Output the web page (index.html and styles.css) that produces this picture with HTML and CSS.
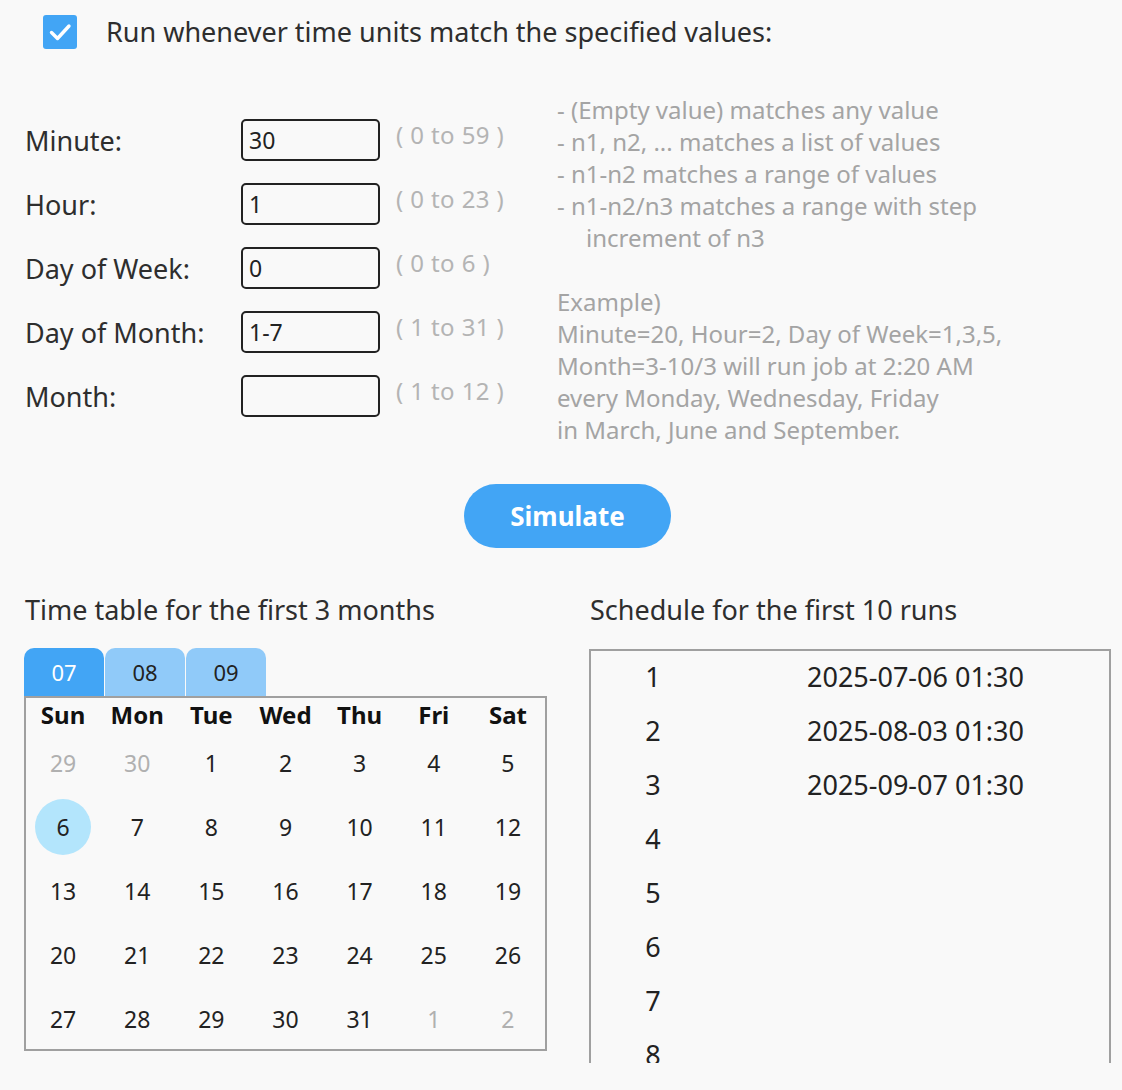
FILE: index.html
```html
<!DOCTYPE html>
<html lang="en">
<head>
<meta charset="utf-8">
<title>Schedule</title>
<link rel="stylesheet" href="styles.css">
</head>
<body>
<div class="page">
  <label class="check-row">
    <span class="checkbox">
      <svg width="34" height="34" viewBox="0 0 34 34"><path d="M8.5 17.5 L14.5 23.5 L26 11" fill="none" stroke="#fff" stroke-width="3.4" stroke-linecap="round" stroke-linejoin="round"/></svg>
    </span>
    <span class="check-label">Run whenever time units match the specified values:</span>
  </label>

  <div class="main">
    <div class="form">
      <div class="f-label">Minute:</div><div class="f-input">30</div><div class="f-hint">( 0 to 59 )</div>
      <div class="f-label">Hour:</div><div class="f-input">1</div><div class="f-hint">( 0 to 23 )</div>
      <div class="f-label">Day of Week:</div><div class="f-input">0</div><div class="f-hint">( 0 to 6 )</div>
      <div class="f-label">Day of Month:</div><div class="f-input">1-7</div><div class="f-hint">( 1 to 31 )</div>
      <div class="f-label">Month:</div><div class="f-input"></div><div class="f-hint">( 1 to 12 )</div>
    </div>
    <div class="desc">
      <div>- (Empty value) matches any value</div>
      <div>- n1, n2, ... matches a list of values</div>
      <div>- n1-n2 matches a range of values</div>
      <div>- n1-n2/n3 matches a range with step</div>
      <div class="indent">increment of n3</div>
      <div class="blank"></div>
      <div>Example)</div>
      <div>Minute=20, Hour=2, Day of Week=1,3,5,</div>
      <div>Month=3-10/3 will run job at 2:20 AM</div>
      <div>every Monday, Wednesday, Friday</div>
      <div>in March, June and September.</div>
    </div>
  </div>

  <div class="btn-row"><button class="simulate">Simulate</button></div>

  <div class="bottom">
    <div class="col-left">
      <div class="title">Time table for the first 3 months</div>
      <div class="tabs">
        <div class="tab active">07</div>
        <div class="tab">08</div>
        <div class="tab">09</div>
      </div>
      <div class="calendar">
        <div class="cal-head">
          <span>Sun</span><span>Mon</span><span>Tue</span><span>Wed</span><span>Thu</span><span>Fri</span><span>Sat</span>
        </div>
        <div class="cal-row">
          <span class="muted">29</span><span class="muted">30</span><span>1</span><span>2</span><span>3</span><span>4</span><span>5</span>
        </div>
        <div class="cal-row">
          <span><i class="sel">6</i></span><span>7</span><span>8</span><span>9</span><span>10</span><span>11</span><span>12</span>
        </div>
        <div class="cal-row">
          <span>13</span><span>14</span><span>15</span><span>16</span><span>17</span><span>18</span><span>19</span>
        </div>
        <div class="cal-row">
          <span>20</span><span>21</span><span>22</span><span>23</span><span>24</span><span>25</span><span>26</span>
        </div>
        <div class="cal-row">
          <span>27</span><span>28</span><span>29</span><span>30</span><span>31</span><span class="muted">1</span><span class="muted">2</span>
        </div>
      </div>
    </div>
    <div class="col-right">
      <div class="title">Schedule for the first 10 runs</div>
      <div class="schedule">
        <div class="s-row"><span class="s-num">1</span><span class="s-date">2025-07-06 01:30</span></div>
        <div class="s-row"><span class="s-num">2</span><span class="s-date">2025-08-03 01:30</span></div>
        <div class="s-row"><span class="s-num">3</span><span class="s-date">2025-09-07 01:30</span></div>
        <div class="s-row"><span class="s-num">4</span><span class="s-date"></span></div>
        <div class="s-row"><span class="s-num">5</span><span class="s-date"></span></div>
        <div class="s-row"><span class="s-num">6</span><span class="s-date"></span></div>
        <div class="s-row"><span class="s-num">7</span><span class="s-date"></span></div>
        <div class="s-row"><span class="s-num">8</span><span class="s-date"></span></div>
      </div>
    </div>
  </div>
</div>
</body>
</html>
```

FILE: styles.css
```css
* { box-sizing: border-box; }
html, body { margin: 0; padding: 0; }
body {
  background: #f9f9f9;
  color: #222;
  font-family: "Noto Sans", "Open Sans", sans-serif;
  font-size: 24px;
  width: 1122px;
  height: 1090px;
  overflow: hidden;
}
.page { padding: 14px 0 0 0; }

.check-row {
  display: flex;
  align-items: center;
  padding-left: 43px;
  height: 35px;
}
.checkbox {
  width: 34px;
  height: 34px;
  background: #42a5f5;
  border-radius: 3px;
  display: flex;
}
.check-label {
  margin-left: 29px;
  font-size: 27px;
  color: #2e2e2e;
}

.main {
  display: flex;
  margin-top: 45px;
}
.form {
  display: grid;
  grid-template-columns: 216px 139px auto;
  grid-auto-rows: 64px;
  align-items: center;
  padding-left: 25px;
  padding-top: 14px;
  width: 557px;
}
.f-label { font-size: 27px; color: #2e2e2e; }
.f-input {
  height: 42px;
  border: 2px solid #222;
  border-radius: 5px;
  padding-left: 6px;
  font-size: 23px;
  line-height: 38px;
  color: #222;
}
.f-hint {
  align-self: start;
  margin-top: 10px;
  padding-left: 16px;
  font-size: 24px;
  letter-spacing: 0.4px;
  line-height: 33px;
  color: #b4b4b4;
}
.desc {
  font-size: 24px;
  line-height: 32px;
  color: #a4a4a4;
}
.desc .indent { padding-left: 29px; }
.desc .blank { height: 32px; }

.btn-row {
  margin-top: 38px;
  padding-left: 464px;
}
.simulate {
  width: 207px;
  height: 64px;
  border: none;
  border-radius: 32px;
  background: #42a5f5;
  color: #fff;
  font-family: "Noto Sans", "Open Sans", sans-serif;
  font-weight: bold;
  font-size: 26px;
  padding: 0;
}

.bottom {
  display: flex;
  margin-top: 44px;
}
.col-left { margin-left: 24px; width: 523px; }
.col-right { margin-left: 42px; width: 522px; }
.title {
  font-size: 27px;
  color: #2e2e2e;
  height: 36px;
  line-height: 36px;
  padding-left: 1px;
}
.tabs {
  display: flex;
  margin-top: 20px;
  height: 48px;
}
.tab {
  width: 80px;
  height: 48px;
  background: #90caf9;
  border-radius: 10px 10px 0 0;
  text-align: center;
  line-height: 48px;
  font-size: 22px;
  color: #222;
}
.tab + .tab { margin-left: 1px; }
.tab.active { background: #42a5f5; color: #fff; }

.calendar {
  border: 2px solid #a0a0a0;
  height: 355px;
  overflow: hidden;
}
.cal-head, .cal-row {
  display: grid;
  grid-template-columns: repeat(7, 1fr);
  text-align: center;
  align-items: center;
}
.cal-head {
  height: 33px;
  font-weight: bold;
  font-size: 24px;
  color: #111;
}
.cal-row {
  height: 64px;
  font-size: 23px;
  color: #222;
}
.cal-row .muted { color: #b0b0b0; }
.sel {
  font-style: normal;
  display: inline-flex;
  width: 56px;
  height: 56px;
  border-radius: 50%;
  background: #b3e5fc;
  align-items: center;
  justify-content: center;
}

.schedule {
  margin-top: 21px;
  border: 2px solid #a0a0a0;
  border-bottom: none;
  height: 414px;
  overflow: hidden;
}
.s-row {
  display: flex;
  height: 54px;
  padding-bottom: 4px;
  align-items: center;
  font-size: 27px;
  color: #222;
}
.s-num { width: 124px; text-align: center; }
.s-date { padding-left: 92px; }
```
